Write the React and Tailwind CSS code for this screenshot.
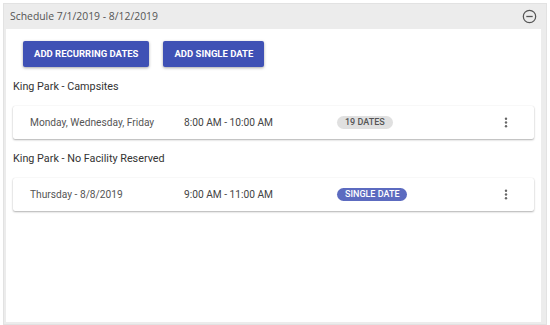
export default function App() {
  const body = { fontFamily: "Roboto, 'Liberation Sans', sans-serif" };
  const Kebab = () => (
    <svg width="4" height="11" viewBox="0 0 4 11" className="text-[#666]">
      <circle cx="2" cy="1.8" r="1.2" fill="currentColor" />
      <circle cx="2" cy="5.5" r="1.2" fill="currentColor" />
      <circle cx="2" cy="9.2" r="1.2" fill="currentColor" />
    </svg>
  );
  const Row = ({ days, time, badge, primary }) => (
    <div className="mx-[7px] h-[33px] flex items-center bg-white rounded-[2px] shadow-[0_1px_2px_rgba(0,0,0,0.3),0_0_1px_rgba(0,0,0,0.12)]">
      <div className="w-[171px] pl-[17px] text-[10.2px] text-[#555]">{days}</div>
      <div className="w-[153px] text-[10.2px] text-[#444]">{time}</div>
      <div className="flex-1 flex items-center">
        <span
          className={
            primary
              ? "inline-flex items-center px-[8px] h-[13px] rounded-full bg-[#5c6bc0] text-white text-[9px] font-medium"
              : "inline-flex items-center px-[8px] h-[13px] rounded-full bg-[#e0e0e0] text-[#555] text-[9px] font-medium"
          }
        >
          {badge}
        </span>
      </div>
      <div className="w-[40px] flex items-center pl-[10px]">
        <Kebab />
      </div>
    </div>
  );
  return (
    <div className="w-[550px] h-[325px] bg-white pt-[3px] px-[3px]" style={body}>
      <div className="h-[322px] flex flex-col bg-[#ececec] border border-[#e2e2e2]">
        <div className="h-[25px] flex items-center justify-between pl-[6px] pr-[9px]">
          <span className="text-[10.4px] text-[#555]" style={{ fontFamily: "'Open Sans', sans-serif" }}>
            Schedule 7/1/2019 - 8/12/2019
          </span>
          <svg width="15" height="15" viewBox="0 0 16 16">
            <circle cx="8" cy="8" r="6.6" fill="none" stroke="#555" strokeWidth="1.3" />
            <line x1="4.6" y1="8" x2="11.4" y2="8" stroke="#555" strokeWidth="1.4" />
          </svg>
        </div>
        <div className="flex-1 bg-white ml-[2px] mr-[5px] mb-[2px] flex flex-col">
          <div className="flex gap-[14px] pl-[17px] pt-[12px]">
            <button className="h-[26px] px-[11px] bg-[#3f51b5] text-white text-[9.5px] font-bold rounded-[2px] shadow-[0_1px_3px_rgba(0,0,0,0.35)]">
              ADD RECURRING DATES
            </button>
            <button className="h-[26px] px-[11px] bg-[#3f51b5] text-white text-[9.5px] font-bold rounded-[2px] shadow-[0_1px_3px_rgba(0,0,0,0.35)]">
              ADD SINGLE DATE
            </button>
          </div>
          <div className="pl-[7px] mt-[12px] text-[10.8px] text-[#333] h-[16px] leading-[16px]">King Park - Campsites</div>
          <div className="mt-[11px]">
            <Row days="Monday, Wednesday, Friday" time="8:00 AM - 10:00 AM" badge="19 DATES" />
          </div>
          <div className="pl-[7px] mt-[12px] text-[10.8px] text-[#333] h-[16px] leading-[16px]">King Park - No Facility Reserved</div>
          <div className="mt-[11px]">
            <Row days="Thursday - 8/8/2019" time="9:00 AM - 11:00 AM" badge="SINGLE DATE" primary />
          </div>
        </div>
      </div>
    </div>
  );
}
